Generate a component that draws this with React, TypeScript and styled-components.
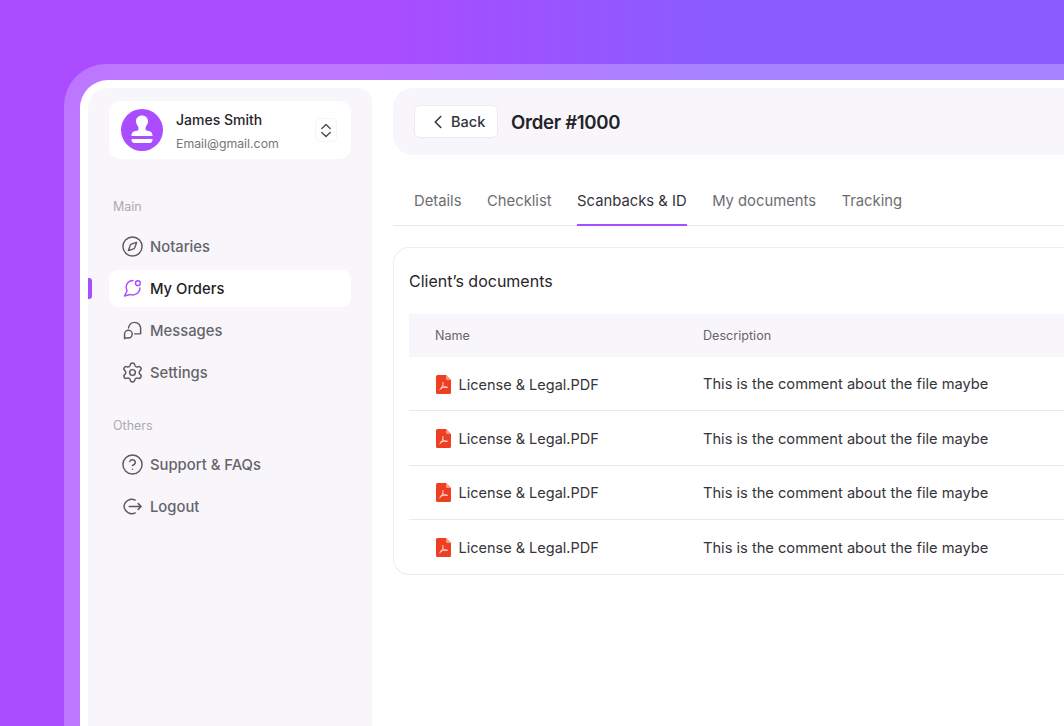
import React from "react";
import styled, { createGlobalStyle } from "styled-components";
import { ChevronLeft, Compass, Settings, CircleHelp } from "lucide-react";

const Global = createGlobalStyle`
  html, body { margin: 0; padding: 0; background: #fff; }
  body { font-family: Inter, "Liberation Sans", sans-serif; -webkit-font-smoothing: antialiased; }
  * { box-sizing: border-box; }
`;

const Page = styled.div`
  width: 1064px;
  height: 726px;
  overflow: hidden;
  padding: 64px 0 0 64px;
  background: linear-gradient(90deg, #a94dff 0%, #a94dff 36%, #8a5cff 68%, #8a5cff 100%);
`;
const Frame = styled.div`
  width: 1200px;
  height: 800px;
  padding: 16px 0 0 16px;
  border-top-left-radius: 42px;
  background: rgba(255, 255, 255, 0.24);
`;
const Window = styled.div`
  display: flex;
  height: 100%;
  padding: 8px 0 0 8px;
  background: #fff;
  border-top-left-radius: 28px;
`;
const Sidebar = styled.aside`
  position: relative;
  width: 284px;
  flex: none;
  padding: 13px 21px 0;
  background: #f8f6fa;
  border-top-left-radius: 20px;
  border-top-right-radius: 14px;
`;
const Profile = styled.div`
  display: flex;
  align-items: center;
  height: 58px;
  padding: 0 14px 0 12px;
  background: #fff;
  border-radius: 12px;
`;
const Avatar = styled.div`
  width: 42px;
  height: 42px;
  flex: none;
  border-radius: 50%;
  background: #a94dff;
  display: flex;
  align-items: center;
  justify-content: center;
`;
const ProfileText = styled.div`
  flex: 1;
  margin-left: 13px;
  padding-top: 2px;
`;
const ProfileName = styled.div`
  font-size: 14px;
  line-height: 18px;
  font-weight: 450;
  color: #27252b;
`;
const ProfileMail = styled.div`
  font-size: 12.3px;
  line-height: 16px;
  margin-top: 7px;
  color: #77757b;
`;
const SwitchButton = styled.div`
  width: 22px;
  height: 24px;
  display: flex;
  align-items: center;
  justify-content: center;
  border-radius: 5px;
  border: 1px solid #f6f4f8;
  color: #4e4c52;
`;
const SectionLabel = styled.div<{ $top: number; $below: number }>`
  margin-top: ${(p) => p.$top}px;
  margin-bottom: ${(p) => p.$below}px;
  font-size: 12.5px;
  line-height: 16px;
  color: #acaab0;
  padding-left: 4px;
`;
const NavItem = styled.div<{ $active?: boolean }>`
  display: flex;
  align-items: center;
  gap: 6.5px;
  height: 37px;
  margin-bottom: 5px;
  padding-left: 11.5px;
  border-radius: 9px;
  font-size: 14.8px;
  font-weight: 450;
  background: ${(p) => (p.$active ? "#fff" : "transparent")};
  color: ${(p) => (p.$active ? "#1f1d23" : "#66646a")};
  & > svg { flex: none; color: ${(p) => (p.$active ? "#a94dff" : "#5b595f")}; }
`;
const ActiveMark = styled.div`
  position: absolute;
  left: 0;
  top: 190px;
  width: 4px;
  height: 21px;
  background: #a94dff;
  border-radius: 0 3px 3px 0;
`;
const Main = styled.main`
  flex: 1;
  margin-left: 21px;
`;
const Header = styled.header`
  display: flex;
  align-items: center;
  height: 67px;
  padding-left: 21px;
  background: #f8f6fa;
  border-radius: 20px 0 0 20px;
`;
const BackButton = styled.div`
  display: flex;
  align-items: center;
  gap: 2px;
  width: 84px;
  height: 33px;
  padding-left: 12px;
  background: #fff;
  border: 1px solid #ececf0;
  border-radius: 6px;
  font-size: 14.5px;
  font-weight: 450;
  color: #35333a;
`;
const Title = styled.h1`
  margin: 0 0 0 13px;
  font-size: 18.6px;
  line-height: 24px;
  font-weight: 600;
  letter-spacing: -0.3px;
  color: #25232a;
`;
const Tabs = styled.nav`
  display: flex;
  gap: 25.5px;
  height: 51px;
  margin-top: 20px;
  padding-left: 21px;
  border-bottom: 1px solid #ebe9ee;
`;
const Tab = styled.div<{ $active?: boolean }>`
  height: 51px;
  padding-top: 17px;
  font-size: 14.8px;
  line-height: 18px;
  font-weight: 400;
  color: ${(p) => (p.$active ? "#35333a" : "#6e6c72")};
  border-bottom: 2px solid ${(p) => (p.$active ? "#a94dff" : "transparent")};
`;
const Card = styled.section`
  margin-top: 21px;
  padding: 0 0 0 15px;
  height: 328px;
  border: 1px solid #edecef;
  border-right: 0;
  border-radius: 16px 0 0 16px;
  background: #fff;
`;
const CardTitle = styled.h2`
  margin: 0;
  height: 66px;
  padding-top: 23px;
  font-size: 16px;
  line-height: 20px;
  font-weight: 400;
  color: #27252b;
`;
const HeadRow = styled.div`
  display: grid;
  grid-template-columns: 268px 1fr;
  align-items: center;
  height: 43px;
  padding-left: 26px;
  background: #f8f6fa;
  font-size: 12.6px;
  font-weight: 400;
  color: #67656b;
`;
const Row = styled.div`
  display: grid;
  grid-template-columns: 267px 1fr;
  align-items: center;
  height: 54.4px;
  padding-left: 27px;
  padding-top: 1px;
  font-size: 14.65px;
  color: #36343a;
  border-bottom: 1px solid #ebe9ee;
  &:last-child { border-bottom: 0; }
`;
const FileCell = styled.div`
  display: flex;
  align-items: center;
  gap: 7.5px;
  font-size: 14.5px;
  color: #36343a;
`;

const Stamp = () => (
  <svg width="22" height="30" viewBox="0 0 22 30" fill="#fff">
    <path d="M11 0.500C7.400 0.500 5 3.100 5 6.300c0 2.200 1 3.500 1.800 4.800.6 1 .9 2 .7 3-.2 1.200-1.200 1.800-2.500 2C3.200 16.400.6 16.800.4 21h21.200c-.2-4.200-2.800-4.600-4.600-4.900-1.300-.2-2.300-.8-2.500-2-.2-1 .1-2 .7-3 .8-1.300 1.800-2.600 1.800-4.800C17 3.100 14.600.500 11 .500z" />
    <path d="M.6 24h20.800v1.200c0 1.600-1.200 2.800-2.800 2.800H3.400C1.800 28 .6 26.800.6 25.200z" />
  </svg>
);
const ChevronPair = () => (
  <svg width="12" height="15" viewBox="0 0 12 15" fill="none" stroke="currentColor" strokeWidth="1.4" strokeLinecap="round" strokeLinejoin="round">
    <path d="M1.800 5.600L6 1.400l4.200 4.200" />
    <path d="M1.800 9.400L6 13.600l4.200-4.200" />
  </svg>
);
const Icon23 = styled.svg.attrs({
  width: 23,
  height: 23,
  viewBox: "-2 -2 24 24",
  fill: "none",
  stroke: "currentColor",
  strokeWidth: 1.5,
  strokeLinecap: "round",
  strokeLinejoin: "round",
})``;
const OrdersIcon = () => (
  <Icon23>
    <path d="M10.600 1.700C6.600 1.500 3.400 4.500 3.400 8.500c0 1.500.4 2.800 1 3.800L1.600 17.800l5.800-1.600c.8.400 1.800.6 2.800.6 4 0 7.600-3 7.600-7.300" />
    <circle cx="15.600" cy="4.400" r="2.500" />
  </Icon23>
);
const MessagesIcon = () => (
  <Icon23>
    <path d="M5.800 7.300C6.500 3.900 9.200 1.500 12.300 1.500c3.600 0 6.200 3 6.200 6.500v5.500h-6.300" />
    <path d="M1.700 18.700v-5.200a4 4 0 1 1 4 4.300H2.700c-.6 0-1 .4-1 .9z" />
  </Icon23>
);
const LogoutIcon = () => (
  <Icon23>
    <path d="M12.800 3.300A8.200 8.200 0 0 0 1.200 10a8.200 8.200 0 0 0 11.600 6.700" />
    <path d="M6.500 10h12.500M16 7l3 3-3 3" />
  </Icon23>
);
const PdfIcon = () => (
  <svg width="15" height="19" viewBox="0 0 15 19">
    <path d="M1.500 0H10l5 5v12.500a1.500 1.500 0 0 1-1.500 1.500h-12A1.500 1.500 0 0 1 0 17.500V1.500A1.500 1.500 0 0 1 1.500 0z" fill="#ee3f22" />
    <path d="M10 0l5 5h-3.500A1.500 1.500 0 0 1 10 3.500z" fill="#f79a85" />
    <path d="M7 7.500c.4 2.500-1 5.500-3.300 7.500M7.300 11c1 1 2.600 1.500 4.200 1.300M4.500 13.300c2-.9 4-1.300 6-1.200" fill="none" stroke="#fff" strokeWidth="0.8" strokeLinecap="round" />
  </svg>
);

const rows = [0, 1, 2, 3];

export default function App() {
  return (
    <Page>
      <Global />
      <Frame>
        <Window>
          <Sidebar>
            <ActiveMark />
            <Profile>
              <Avatar><Stamp /></Avatar>
              <ProfileText>
                <ProfileName>James Smith</ProfileName>
                <ProfileMail>Email@gmail.com</ProfileMail>
              </ProfileText>
              <SwitchButton><ChevronPair /></SwitchButton>
            </Profile>
            <SectionLabel $top={40} $below={13}>Main</SectionLabel>
            <NavItem><Compass size={23} strokeWidth={1.5} />Notaries</NavItem>
            <NavItem $active><OrdersIcon />My Orders</NavItem>
            <NavItem><MessagesIcon />Messages</NavItem>
            <NavItem><Settings size={23} strokeWidth={1.5} />Settings</NavItem>
            <SectionLabel $top={27} $below={12}>Others</SectionLabel>
            <NavItem><CircleHelp size={23} strokeWidth={1.5} />Support &amp; FAQs</NavItem>
            <NavItem><LogoutIcon />Logout</NavItem>
          </Sidebar>
          <Main>
            <Header>
              <BackButton><ChevronLeft size={22} strokeWidth={1.7} />Back</BackButton>
              <Title>Order #1000</Title>
            </Header>
            <Tabs>
              <Tab>Details</Tab>
              <Tab>Checklist</Tab>
              <Tab $active>Scanbacks &amp; ID</Tab>
              <Tab>My documents</Tab>
              <Tab>Tracking</Tab>
            </Tabs>
            <Card>
              <CardTitle>Client’s documents</CardTitle>
              <HeadRow><span>Name</span><span>Description</span></HeadRow>
              {rows.map((r) => (
                <Row key={r}>
                  <FileCell><PdfIcon />License &amp; Legal.PDF</FileCell>
                  <span>This is the comment about the file maybe</span>
                </Row>
              ))}
            </Card>
          </Main>
        </Window>
      </Frame>
    </Page>
  );
}
